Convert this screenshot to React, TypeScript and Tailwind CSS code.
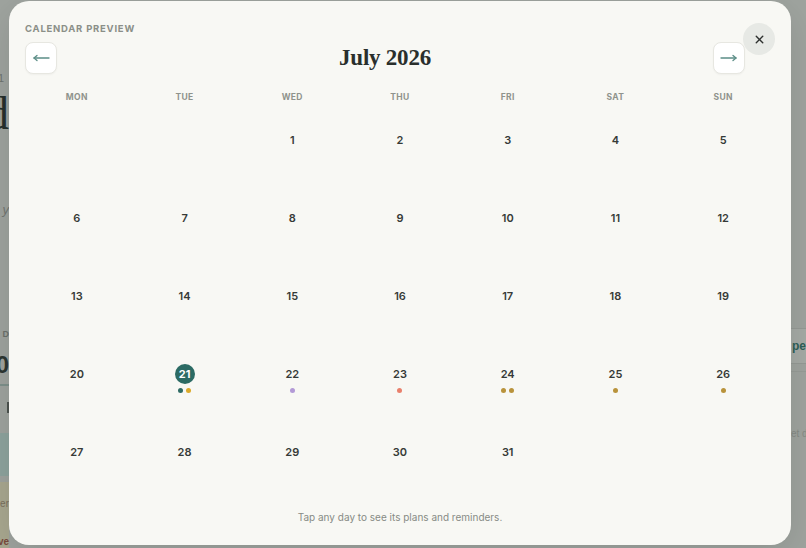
import React from "react";
import { X } from "lucide-react";

const WEEK = ["MON", "TUE", "WED", "THU", "FRI", "SAT", "SUN"];

const cells: (number | null)[] = [
  null, null,
  ...Array.from({ length: 31 }, (_, i) => i + 1),
  null, null,
];

const DOTS: Record<number, string[]> = {
  21: ["bg-[#2f6b64]", "bg-[#dcaa2a]"],
  22: ["bg-[#b39ad6]"],
  23: ["bg-[#e9806c]"],
  24: ["bg-[#b9933b]", "bg-[#b9933b]"],
  25: ["bg-[#b9933b]"],
  26: ["bg-[#b9933b]"],
};

function Arrow({ dir }: { dir: "left" | "right" }) {
  return (
    <svg width="18" height="10" viewBox="0 0 18 10" fill="none" stroke="#5b8d86" strokeWidth="1.3" strokeLinecap="round" strokeLinejoin="round">
      {dir === "left" ? (
        <>
          <path d="M2 5H17" />
          <path d="M5 2.5L2 5L5 7.5" />
        </>
      ) : (
        <>
          <path d="M1 5H16" />
          <path d="M13 2.5L16 5L13 7.5" />
        </>
      )}
    </svg>
  );
}

function BackgroundPage() {
  return (
    <div className="flex h-[548px] w-[806px] justify-between bg-[#9fa49f] font-['Liberation_Sans',sans-serif]">
      <div className="flex w-[9px] flex-col items-end overflow-hidden">
        <div className="mr-[5px] mt-[72px] text-[11px] leading-[12px] text-[#6f746f]">1</div>
        <div className="mt-[8px] font-['Liberation_Serif',serif] text-[46px] leading-[44px] text-[#27302c]">d</div>
        <div className="mt-[66px] text-[13px] italic leading-[16px] text-[#727772]">y</div>
        <div className="mt-[110px] text-[9px] font-bold leading-[12px] text-[#6c716c]">D</div>
        <div className="mt-[12px] text-[24px] font-bold leading-[26px] text-[#2d3632]">0</div>
        <div className="mt-[6px] h-[2px] w-[9px] bg-[#7e918b]" />
        <div className="mt-[16px] h-[12px] w-[2px] bg-[#4d534f]" />
        <div className="mt-[20px] h-[48px] w-[9px] bg-[#8ea49e]" />
        <div className="mt-[6px] flex h-[66px] w-[9px] flex-col items-end bg-[#a9a890]">
          <div className="mt-[16px] text-[10px] leading-[12px] text-[#7b705d]">er</div>
          <div className="mt-[26px] text-[10px] font-bold leading-[12px] text-[#7a4a3c]">ve</div>
        </div>
      </div>
      <div className="flex w-[15px] flex-col overflow-hidden">
        <div className="mt-[328px] flex h-[36px] w-[30px] items-center border-y border-[#959a95] bg-[#a6aba6] pl-[1px]">
          <span className="text-[12px] font-bold text-[#2f5f58]">pen</span>
        </div>
        <div className="h-[8px] w-[30px] border-b border-[#979c97]" />
        <div className="mt-[54px] whitespace-nowrap text-[10px] text-[#868b86]">et d</div>
      </div>
    </div>
  );
}

export default function App() {
  return (
    <div className="relative h-[548px] w-[806px] overflow-hidden">
      <BackgroundPage />
      <div className="absolute left-[9px] top-[1px] flex h-[544px] w-[782px] flex-col rounded-[20px] bg-[#f8f8f4] px-[14px] pt-[21px] font-['Inter',sans-serif] shadow-[0_10px_40px_rgba(0,0,0,0.12)]">
        <div className="ml-[2px] text-[9.5px] font-bold leading-[14px] tracking-[0.08em] text-[#8b8f88]">
          CALENDAR PREVIEW
        </div>
        <div className="mt-[6px] flex items-center justify-between pl-[2px] pr-[32px]">
          <button className="flex h-8 w-8 items-center justify-center rounded-[8px] border border-[#e7e7e1] bg-white shadow-[0_1px_2px_rgba(0,0,0,0.04)]">
            <Arrow dir="left" />
          </button>
          <div className="font-['Liberation_Serif',serif] text-[23px] font-bold leading-[32px] tracking-[-0.01em] text-[#2a2f2c]">
            July 2026
          </div>
          <button className="flex h-8 w-8 items-center justify-center rounded-[8px] border border-[#e7e7e1] bg-white shadow-[0_1px_2px_rgba(0,0,0,0.04)]">
            <Arrow dir="right" />
          </button>
        </div>
        <div className="mt-[17px] grid grid-cols-7">
          {WEEK.map((w) => (
            <div key={w} className="text-center text-[8.5px] font-bold leading-[12px] tracking-[0.04em] text-[#8f938c]">
              {w}
            </div>
          ))}
        </div>
        <div className="mt-[22px] grid grid-cols-7 gap-y-2">
          {cells.map((d, i) => (
            <div key={i} className="flex h-[70px] flex-col items-center pt-[5px]">
              {d !== null && (
                <>
                  <div
                    className={
                      d === 21
                        ? "flex h-5 w-5 items-center justify-center rounded-full bg-[#2c6b64] text-[11px] font-bold text-white"
                        : "flex h-5 w-5 items-center justify-center text-[11px] font-semibold text-[#363a37]"
                    }
                  >
                    {d}
                  </div>
                  {DOTS[d] && (
                    <div className="mt-[4px] flex gap-[3px]">
                      {DOTS[d].map((c, j) => (
                        <span key={j} className={`h-[5px] w-[5px] rounded-full ${c}`} />
                      ))}
                    </div>
                  )}
                </>
              )}
            </div>
          ))}
        </div>
        <div className="mt-[2px] text-center text-[10px] leading-[16px] text-[#878b85]">
          Tap any day to see its plans and reminders.
        </div>
        <button className="absolute right-[16px] top-[22px] flex h-8 w-8 items-center justify-center rounded-full bg-[#e7e9e5]">
          <X size={13} strokeWidth={2.6} color="#2d302e" />
        </button>
      </div>
    </div>
  );
}
